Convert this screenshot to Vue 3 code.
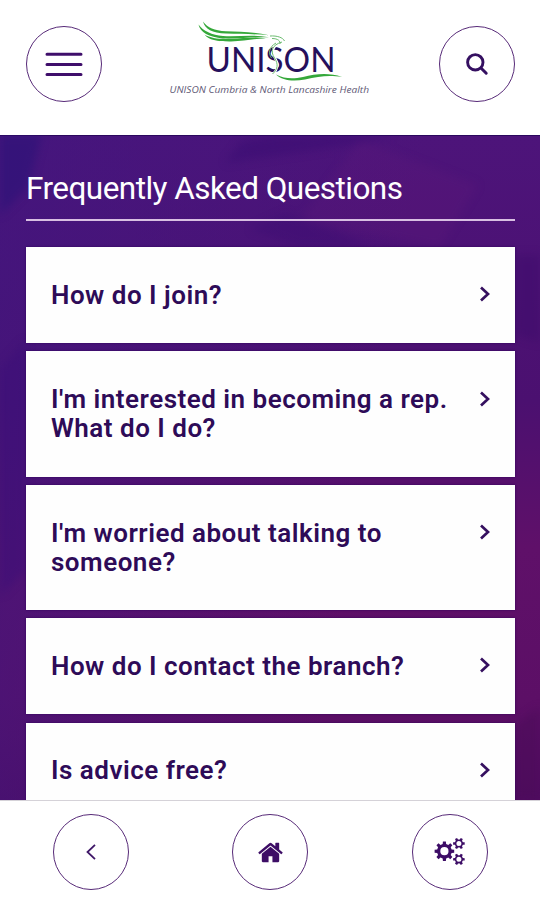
<template>
  <div class="faq-page">
    <header class="top-bar">
      <button class="round-btn" aria-label="Menu">
        <svg width="38" height="26" viewBox="0 0 38 26">
          <path d="M2 3.200h34M2 13.400h34M2 23.600h34" stroke="#3f0e6b" stroke-width="3" stroke-linecap="round" />
        </svg>
      </button>

      <svg class="logo" width="210" height="90" viewBox="165 14 210 90">
        <text x="205.500" y="71.800" class="logo-name" textLength="129" lengthAdjust="spacingAndGlyphs">UNISON</text>
        <g fill="#35a83a">
          <path d="M202 21.500C207 28 213 30.500 225 31.300C238 32 252 31.500 268 35.300C252 33.800 240 34.300 225 33.600C211 33 204 29 202 21.500Z" />
          <path d="M197.500 24.500C202 31 211 35 222 36C238 37 252 34 268 37.300C252 36.500 240 39.200 222 38.400C208 37 199 32.500 197.500 24.500Z" />
          <path d="M203.500 34.500C210 38.500 218 39.200 230 38.800C242 38.500 252 36.500 265 38.300C252 38.800 243 41.300 230 41.400C217 41.500 208 40.500 203.500 34.500Z" />
          <path d="M275 74.500C284 79 292 79 302 77C315 73.800 328 72.500 341 77C327 75 318 76.500 304 79.500C292 81.800 281 80.500 275 74.500Z" />
        </g>
        <g fill="none">
          <path d="M281 42C272 45 270 51 274 58C278 64 277 69 272 74" stroke="#fff" stroke-width="2.400" />
          <path d="M269 36C276 35.500 282 37.500 283.500 41M271 38.500C277 38.500 279.500 41 279 44M281 42C271 45 269 51 273.500 58C277.500 64 277 69 271.500 74M275 43C268 47 267 53 270.500 58" stroke="#6cbc70" stroke-width="1" />
        </g>
        <text x="168.500" y="92.700" class="logo-sub" textLength="199.500" lengthAdjust="spacingAndGlyphs">UNISON Cumbria &amp; North Lancashire Health</text>
      </svg>

      <button class="round-btn" aria-label="Search">
        <svg width="24" height="24" viewBox="0 0 24 24" fill="none" stroke="#351061" stroke-linecap="round">
          <circle cx="10.300" cy="10.300" r="7.700" stroke-width="2.900" />
          <path d="M16.200 16.200l5 5" stroke-width="3" />
        </svg>
      </button>
    </header>

    <main class="content">
      <!-- faceted backdrop -->
      <svg class="backdrop" width="540" height="665" viewBox="0 0 540 665">
        <path d="M-10 -10H44L28 52L-10 90Z" fill="#2c1278" opacity=".6" />
        <path d="M225 28L242 6L310 -6H420L350 10Z" fill="#340a70" opacity=".4" />
        <path d="M285 78Q330 92 370 112H300L250 94Z" fill="#340a70" opacity=".3" />
        <path d="M360 5L478 50L440 112L300 85Z" fill="#621a7c" opacity=".22" />
        <path d="M515 120H550V210L515 200Z" fill="#390b69" opacity=".4" />
        <path d="M-10 245L26 205V435L-10 470Z" fill="#390d78" opacity=".45" />
        <path d="M515 590L550 565V675H515Z" fill="#4a0b58" opacity=".5" />
      </svg>

      <h1>Frequently Asked Questions</h1>
      <ul class="faq-list">
        <li v-for="question in questions" :key="question" class="faq-item">
          <span class="question">{{ question }}</span>
          <svg class="arrow" width="12" height="18" viewBox="0 0 12 18">
            <path d="M2 2.500l7 6.500l-7 6.500" fill="none" stroke="#35105f" stroke-width="2.700" />
          </svg>
        </li>
      </ul>
    </main>

    <footer class="bottom-bar">
      <button class="round-btn" aria-label="Back">
        <svg width="12" height="18" viewBox="0 0 12 18">
          <path d="M10 1.800l-7.500 7.200l7.500 7.200" fill="none" stroke="#3f1768" stroke-width="1.800" />
        </svg>
      </button>
      <button class="round-btn" aria-label="Home">
        <svg width="27" height="27" viewBox="0 0 1792 1792" fill="#3d0d66">
          <path d="M1472 992v480q0 26-19 45t-45 19h-384v-384h-256v384h-384q-26 0-45-19t-19-45v-480q0-1 .5-3t.5-3l575-474 575 474q1 2 1 6zm223-69l-62 74q-8 9-21 11h-3q-13 0-21-7l-692-577-692 577q-12 8-24 7-13-2-21-11l-62-74q-8-10-7-23.500t11-21.500l719-599q32-26 76-26t76 26l244 204v-195q0-14 9-23t23-9h192q14 0 23 9t9 23v408l219 182q10 8 11 21.500t-7 23.500z" />
        </svg>
      </button>
      <button class="round-btn" aria-label="Settings">
        <svg width="32" height="30" viewBox="0 0 32 30" fill="#3d0d66" fill-rule="evenodd">
          <path v-for="(d, i) in gears" :key="i" :d="d" />
        </svg>
      </button>
    </footer>
  </div>
</template>

<script setup>
const questions = [
  'How do I join?',
  "I'm interested in becoming a rep. What do I do?",
  "I'm worried about talking to someone?",
  'How do I contact the branch?',
  'Is advice free?',
]

// toothed wheel with a round hole
const gear = (cx, cy, outer, root, hole, teeth) => {
  const points = []
  const step = (Math.PI * 2) / teeth
  for (let i = 0; i < teeth; i++) {
    const parts = [[-0.3, root], [-0.19, outer], [0.19, outer], [0.3, root]]
    parts.forEach(([offset, r]) => {
      const a = (i + offset) * step
      points.push(`${(cx + r * Math.cos(a)).toFixed(2)} ${(cy + r * Math.sin(a)).toFixed(2)}`)
    })
  }
  return `M${points.join('L')}ZM${cx - hole} ${cy}a${hole} ${hole} 0 1 0 ${hole * 2} 0a${hole} ${hole} 0 1 0 ${-hole * 2} 0Z`
}

const gears = [
  gear(10.4, 14.2, 9.9, 7.4, 4.1, 8),
  gear(24.9, 6.5, 5.9, 4.2, 2.5, 6),
  gear(24.9, 22.3, 5.9, 4.2, 2.5, 6),
]
</script>

<style>
body {
  margin: 0;
}
</style>

<style scoped>
.faq-page {
  width: 540px;
  height: 900px;
  display: flex;
  flex-direction: column;
  overflow: hidden;
  background: #fff;
  font-family: Roboto, "Liberation Sans", sans-serif;
}
.top-bar {
  box-sizing: border-box;
  height: 135px;
  flex: none;
  display: flex;
  justify-content: space-between;
  align-items: flex-start;
  padding: 26px 25px 0 25.500px;
}
.logo {
  margin: -12px 0 0 1px;
}
.logo-name {
  font-family: Lato, sans-serif;
  font-size: 35px;
  fill: #26105c;
}
.logo-sub {
  font-family: "Open Sans", sans-serif;
  font-style: italic;
  font-weight: 400;
  font-size: 9.4px;
  fill: #5e5875;
}
.round-btn {
  box-sizing: border-box;
  width: 76px;
  height: 76px;
  padding: 0;
  display: flex;
  align-items: center;
  justify-content: center;
  border: 1.4px solid #572a78;
  border-radius: 50%;
  background: #fff;
}
.content {
  position: relative;
  box-sizing: border-box;
  flex: 1;
  min-height: 0;
  overflow: hidden;
  padding: 34px 25px 0 26px;
  background:
    linear-gradient(100deg, rgba(66, 22, 126, 0.75) 0, rgba(66, 22, 126, 0) 65%),
    linear-gradient(180deg, #4d147a 0, #4b1070 40%, #5f1069 62%, #5c0f66 85%, #500b60 100%);
  box-shadow: inset 0 1px 0 #2b085e;
}
.backdrop {
  position: absolute;
  top: 0;
  left: 0;
  filter: blur(4px);
}
h1 {
  position: relative;
  margin: 0 0 26px;
  height: 50px;
  border-bottom: 2px solid #d8bfe2;
  color: #fff;
  font-size: 31.500px;
  font-weight: 400;
  line-height: 40px;
  letter-spacing: -0.54px;
  white-space: nowrap;
}
.faq-list {
  position: relative;
  list-style: none;
  margin: 0;
  padding: 0;
  display: flex;
  flex-direction: column;
  gap: 8.2px;
}
.faq-item {
  display: flex;
  justify-content: space-between;
  align-items: flex-start;
  padding: 33.800px 24px 33.400px 25px;
  background: #fefefe;
  box-shadow: 0 0 2px #30045c;
}
.question {
  width: 405px;
  color: #2e0b58;
  font-size: 26px;
  font-weight: 600;
  line-height: 29px;
  letter-spacing: 0.5px;
}
.arrow {
  margin-top: 4.500px;
}
.bottom-bar {
  box-sizing: border-box;
  height: 100px;
  flex: none;
  display: flex;
  justify-content: space-between;
  padding: 13px 52px 0 52.500px;
  border-top: 1px solid #d5d2d8;
}
</style>
